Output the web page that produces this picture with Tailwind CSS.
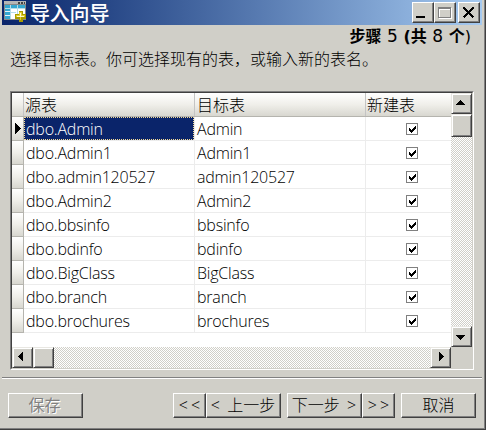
<!DOCTYPE html>
<html lang="zh-CN">
<head>
<meta charset="utf-8">
<title>导入向导</title>
<script src="https://cdn.jsdelivr.net/npm/@tailwindcss/browser@4"></script>
</head>
<body class="overflow-hidden font-['Open_Sans','Noto_Sans_CJK_SC',sans-serif] text-[16px] font-light text-black">
<div class="flex h-[430px] w-[486px] flex-col border-r border-b border-[#404040] bg-[#d0cfc8]">
<div class="flex h-[429px] w-[485px] flex-col border-r border-b border-[#808080] pr-[2px] pl-[2px]">
  <header class="flex h-[25px] w-[480px] shrink-0 items-start bg-linear-to-r from-[#0a246a] to-[#a6caf0]">
    <svg class="ml-[2px] shrink-0" width="23" height="22" viewBox="0 0 23 22" shape-rendering="crispEdges">
      <path fill="#888" d="M0 1h22v19H0z"/><path fill="#b5b5b5" d="M0 1h22v3H0z"/>
      <path fill="#444" d="M14 2h2v2h-2zM17 2h2v2h-2zM20 2h1v2h-1z"/>
      <path fill="#e4f4fa" d="M1 5h20v14H1z"/>
      <path fill="#35a7d0" d="M1 5h5v3H1zM7 5h6v3H7zM14 5h7v3h-7zM1 9h5v2H1zM1 12h5v3H1zM1 16h5v3H1z"/>
      <path fill="#fff" d="M7 9h6v10H7zM14 9h7v6h-7z"/>
      <path fill="#b5dce9" d="M6 5h1v14H6zM13 5h1v14h-1zM1 8h20v1H1zM7 12h5v1H7z"/>
      <path fill="#a99c00" d="M15 11h4v3h3v5h-3v3h-4v-3h-4v-5h4z"/>
      <path fill="#e0cf2a" d="M15 12h3v3h3v2h-4v3h-1v-3h-4v-2h3z"/><path fill="#fffbd0" d="M16 13h1v3h3v1h-7v-1h3z"/>
    </svg>
    <h1 class="ml-[3px] text-[20px] leading-[27px] font-medium whitespace-nowrap text-white [letter-spacing:-0.2px]">导入向导</h1>
    <div class="mt-[2px] ml-auto mr-[2px] flex shrink-0">
      <button aria-label="最小化" class="h-[21px] w-[22px] border border-t-white border-l-white border-r-[#404040] border-b-[#404040] bg-[#d0cfc8] shadow-[inset_-1px_-1px_#808080]"><svg width="20" height="19" shape-rendering="crispEdges"><path d="M3 13h9v2H3z"/></svg></button>
      <button aria-label="最大化" class="h-[21px] w-[22px] border border-t-white border-l-white border-r-[#404040] border-b-[#404040] bg-[#d0cfc8] shadow-[inset_-1px_-1px_#808080]"><svg width="20" height="19" shape-rendering="crispEdges"><path fill="#fff" d="M4 5h13v11H4zM5 7v8h11V7z" fill-rule="evenodd"/><path fill="#808080" d="M3 4h13v11H3zM4 6v8h11V6z" fill-rule="evenodd"/></svg></button>
      <button aria-label="关闭" class="ml-[2px] h-[21px] w-[22px] border border-t-white border-l-white border-r-[#404040] border-b-[#404040] bg-[#d0cfc8] shadow-[inset_-1px_-1px_#808080]"><svg width="20" height="19" shape-rendering="crispEdges"><path d="M4.500 4.500l10 10M14.500 4.500l-10 10" stroke="#000" stroke-width="2.200"/></svg></button>
    </div>
  </header>

  <div class="flex h-[20px] shrink-0 items-center justify-end pr-[11px] whitespace-nowrap">
    <p class="mt-[3px] text-[16px] leading-[20px] font-bold font-['DejaVu_Sans','Noto_Sans_CJK_SC',sans-serif]">步骤 <span class="text-[17px] font-normal">5</span> <span>(</span>共 <span class="text-[17px] font-normal">8</span> 个<span class="font-normal">)</span></p>
  </div>
  <p class="mt-[2px] ml-[8px] h-[24px] shrink-0 text-[16px] leading-[24px] whitespace-nowrap">选择目标表。你可选择现有的表，或输入新的表名。</p>

  <main class="mt-[20px] ml-[8px] h-[279px] w-[464px] shrink-0 border border-t-[#808080] border-l-[#808080] border-r-white border-b-white">
    <div class="flex h-[277px] w-[462px] flex-col border border-t-[#404040] border-l-[#404040] border-r-[#d0cfc8] border-b-[#d0cfc8] bg-white">
      <div class="flex h-[254px]">
        <div class="w-[439px]">
          <div class="flex h-[24px] border-b border-[#b5b4ae] bg-linear-to-b from-white via-[#f0efea] to-[#d8d7d0] leading-[24px]">
            <div class="w-[12px] border-r border-[#c4c4c4]"></div>
            <div class="w-[171px] border-r border-[#c4c4c4] pl-[1px]">源表</div>
            <div class="w-[171px] border-r border-[#c4c4c4] pl-[2px]">目标表</div>
            <div class="pl-[1px]">新建表</div>
          </div>
          <div id="rows"></div>
        </div>
        <div class="flex w-[21px] flex-col justify-between bg-[#e8e7e3] bg-[repeating-conic-gradient(#d0cfc8_0_25%,#fff_0_50%)] bg-[length:2px_2px]">
          <div>
            <div class="h-[21px] border border-t-[#e8e7e2] border-l-[#e8e7e2] border-r-[#404040] border-b-[#404040] bg-[#d0cfc8] shadow-[inset_1px_1px_#fff,inset_-1px_-1px_#808080]"><svg width="19" height="19" shape-rendering="crispEdges"><path d="M8 6h1v1h1v1h1v1h1v1h1v1H4v-1h1V9h1V8h1V7h1z"/></svg></div>
            <div class="h-[23px] border border-t-[#e8e7e2] border-l-[#e8e7e2] border-r-[#404040] border-b-[#404040] bg-[#d0cfc8] shadow-[inset_1px_1px_#fff,inset_-1px_-1px_#808080]"></div>
          </div>
          <div class="h-[21px] border border-t-[#e8e7e2] border-l-[#e8e7e2] border-r-[#404040] border-b-[#404040] bg-[#d0cfc8] shadow-[inset_1px_1px_#fff,inset_-1px_-1px_#808080]"><svg width="19" height="19" shape-rendering="crispEdges"><path d="M4 8h9v1h-1v1h-1v1h-1v1H9v1H8v-1H7v-1H6v-1H5V9H4z"/></svg></div>
        </div>
      </div>
      <div class="flex h-[21px]">
        <div class="flex w-[439px] bg-[#e8e7e3] bg-[repeating-conic-gradient(#d0cfc8_0_25%,#fff_0_50%)] bg-[length:2px_2px]">
          <div class="w-[21px] border border-t-[#e8e7e2] border-l-[#e8e7e2] border-r-[#404040] border-b-[#404040] bg-[#d0cfc8] shadow-[inset_1px_1px_#fff,inset_-1px_-1px_#808080]"><svg width="19" height="19" shape-rendering="crispEdges"><path d="M10 4v9H9v-1H8v-1H7v-1H6V9H5V8h1V7h1V6h1V5h1V4z"/></svg></div>
          <div class="w-[21px] border border-t-[#e8e7e2] border-l-[#e8e7e2] border-r-[#404040] border-b-[#404040] bg-[#d0cfc8] shadow-[inset_1px_1px_#fff,inset_-1px_-1px_#808080]"></div>
          <div class="ml-auto w-[21px] border border-t-[#e8e7e2] border-l-[#e8e7e2] border-r-[#404040] border-b-[#404040] bg-[#d0cfc8] shadow-[inset_1px_1px_#fff,inset_-1px_-1px_#808080]"><svg width="19" height="19" shape-rendering="crispEdges"><path d="M8 4v9h1v-1h1v-1h1v-1h1V9h1V8h-1V7h-1V6h-1V5H9V4z"/></svg></div>
        </div>
        <div class="w-[21px] bg-[#d0cfc8]"></div>
      </div>
    </div>
  </main>

  <div class="mt-[7px] h-[2px] shrink-0 border-t border-b border-t-[#808080] border-b-white"></div>
  <footer class="mt-[14px] ml-[6px] flex h-[25px] shrink-0 text-[16px] leading-[23px] whitespace-nowrap">
    <button class="w-[75px] border border-t-white border-l-white border-r-[#404040] border-b-[#404040] pr-[2px] font-normal text-[#808080] shadow-[inset_-1px_-1px_#808080] [text-shadow:1px_1px_#fff]">保存</button>
    <button class="ml-[90px] w-[33px] border border-t-white border-l-white border-r-[#404040] border-b-[#404040] pl-[3px] shadow-[inset_-1px_-1px_#808080] [letter-spacing:3px]">&lt;&lt;</button>
    <button class="w-[75px] border border-t-white border-l-white border-r-[#404040] border-b-[#404040] pr-[1px] shadow-[inset_-1px_-1px_#808080] [word-spacing:3px]">&lt; 上一步</button>
    <button class="ml-[6px] w-[75px] border border-t-white border-l-white border-r-[#404040] border-b-[#404040] pr-[1px] shadow-[inset_-1px_-1px_#808080] [word-spacing:3px]">下一步 &gt;</button>
    <button class="w-[33px] border border-t-white border-l-white border-r-[#404040] border-b-[#404040] pl-[3px] shadow-[inset_-1px_-1px_#808080] [letter-spacing:3px]">&gt;&gt;</button>
    <button class="ml-[6px] w-[75px] border border-t-white border-l-white border-r-[#404040] border-b-[#404040] shadow-[inset_-1px_-1px_#808080]">取消</button>
  </footer>
</div>
</div>
<script>
const names = ['Admin','Admin1','admin120527','Admin2','bbsinfo','bdinfo','BigClass','branch','brochures'];
document.getElementById('rows').innerHTML = names.map((n, i) => `
<div class="flex h-[24px] leading-[25px] [letter-spacing:-0.2px]">
  <div class="w-[12px] border-r border-b border-[#b5b4ae] bg-linear-to-b from-white via-[#f0efea] to-[#d8d7d0]">${i === 0 ? '<svg width="11" height="23" shape-rendering="crispEdges"><path d="M3 6h1v1h1v1h1v1h1v1h1v1h1v1H8v1H7v1H6v1H5v1H4v1H3z"/></svg>' : ''}</div>
  <div class="w-[171px] border-r border-b border-[#ececec]"><div class="h-[23px] pl-[2px] ${i === 0 ? 'bg-[#0a246a] text-white outline-1 -outline-offset-1 outline-dotted outline-[#f5db95]' : ''}">dbo.${n}</div></div>
  <div class="w-[171px] border-r border-b border-[#ececec] pl-[2px]">${n}</div>
  <div class="w-[85px] border-b border-[#ececec] pt-[6px] pl-[40px]"><svg width="12" height="12" shape-rendering="crispEdges"><path fill="#808080" d="M0 0h12v12H0z"/><path fill="#fff" d="M1 1h10v10H1z"/><path d="M3 5h1v1h1v1h1V6h1V5h1V4h1V3h1v3H9v1H8v1H7v1H6v1H5V9H4V8H3z"/></svg></div>
</div>`).join('');
</script>
</body>
</html>
